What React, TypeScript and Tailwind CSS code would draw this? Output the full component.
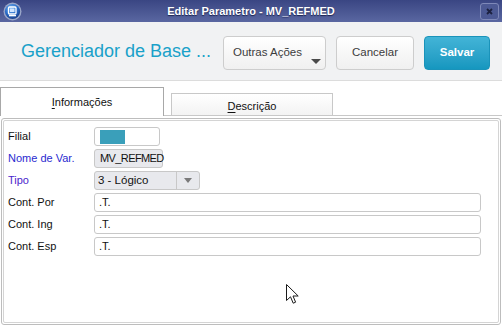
import React from "react";

const font = { fontFamily: '"Liberation Sans", Arial, sans-serif' };

function AppIcon() {
  return (
    <svg width="19" height="19" viewBox="0 0 19 19">
      <defs>
        <radialGradient id="g1" cx="40%" cy="30%" r="70%">
          <stop offset="0%" stopColor="#6fb0f0" />
          <stop offset="60%" stopColor="#2a6cc8" />
          <stop offset="100%" stopColor="#1a3f8a" />
        </radialGradient>
      </defs>
      <circle cx="9.5" cy="9.5" r="9" fill="#9aa6c8" />
      <circle cx="9.5" cy="9.5" r="7.6" fill="url(#g1)" />
      <rect x="5.5" y="5" width="7.5" height="7" rx="1" fill="none" stroke="#ffffff" strokeWidth="1.3" />
      <rect x="7" y="6.5" width="4.5" height="3.5" fill="#cfe4ff" />
      <rect x="6" y="13" width="7" height="1.3" fill="#ffffff" />
    </svg>
  );
}

function Cursor() {
  return (
    <svg width="13" height="21" viewBox="0 0 13 21" className="absolute left-[286px] top-[284px]">
      <path
        d="M0.5 0.5 L0.5 16.5 L4.5 12.8 L7.2 19.2 L9.6 18.2 L7 12 L12.2 12 Z"
        fill="#ffffff"
        stroke="#1a1a1a"
        strokeWidth="1"
        strokeLinejoin="miter"
      />
    </svg>
  );
}

function Row({ label, labelClass, children }: { label: string; labelClass?: string; children: React.ReactNode }) {
  return (
    <div className="flex h-[19px] items-center">
      <div className={"w-[86px] shrink-0 text-[11px] " + (labelClass ?? "text-[#111111]")}>{label}</div>
      {children}
    </div>
  );
}

export default function App() {
  return (
    <div style={font} className="relative flex h-[326px] w-[502px] flex-col overflow-hidden bg-white">
      {/* Title bar */}
      <div className="grid h-[22px] shrink-0 grid-cols-[1fr_auto_1fr] items-center bg-gradient-to-b from-[#3a4683] to-[#5a67a1] px-[3px]">
        <div className="flex items-center">
          <AppIcon />
        </div>
        <div className="text-[11px] font-bold text-white [text-shadow:0_1px_1px_#1a2250]">Editar Parametro - MV_REFMED</div>
        <div className="flex justify-end">
          <div className="flex h-[17px] w-[19px] items-center justify-center rounded-[3px] border border-[#7e88b8] bg-[#4c5994]">
            <svg width="7" height="7" viewBox="0 0 7 7">
              <path d="M1 1 L6 6 M6 1 L1 6" stroke="#1c2140" strokeWidth="1.8" />
            </svg>
          </div>
        </div>
      </div>

      {/* Header */}
      <div className="flex h-[59px] shrink-0 items-center border-b border-[#dcdcdc] bg-[#f1f2f3] pl-[21px] pr-[12px]">
        <div className="flex-1 pt-[1px] text-[18px] text-[#19a1c9]">Gerenciador de Base ...</div>
        <div className="mt-[3px] flex gap-[10px]">
          <button className="relative flex h-[34px] w-[103px] items-center justify-center rounded-[4px] border border-[#cdcdcd] bg-gradient-to-b from-white to-[#f0f0f0] pr-[14px] text-[11.5px] text-[#3c3c3c]">
            Outras Ações
            <svg width="10" height="5" viewBox="0 0 10 5" className="absolute bottom-[5px] right-[4px]">
              <path d="M0 0 L10 0 L5 5 Z" fill="#4a4a4a" />
            </svg>
          </button>
          <button className="flex h-[34px] w-[78px] items-center justify-center rounded-[4px] border border-[#cdcdcd] bg-gradient-to-b from-white to-[#f0f0f0] text-[11.5px] text-[#3c3c3c]">
            Cancelar
          </button>
          <button className="flex h-[34px] w-[66px] items-center justify-center rounded-[4px] border border-[#1a93ba] bg-gradient-to-b from-[#42b4d7] to-[#1597bf] text-[11.5px] font-bold text-white">
            Salvar
          </button>
        </div>
      </div>

      {/* Tabs */}
      <div className="flex h-[35px] shrink-0 items-end pt-[6px]">
        <div className="flex h-[29px] w-[164px] items-center justify-center border-l border-r border-t border-[#a8a8a8] bg-white text-[11px] text-[#111111]">
          <span>
            <span className="underline underline-offset-2">I</span>nformações
          </span>
        </div>
        <div className="h-px w-[7px] self-end bg-[#c8c8c8]" />
        <div className="flex h-[23px] w-[162px] items-center justify-center border border-[#c8c8c8] bg-gradient-to-b from-white to-[#f3f3f3] pt-[3px] text-[11px] text-[#111111]">
          <span>
            <span className="underline underline-offset-2">D</span>escrição
          </span>
        </div>
        <div className="h-px flex-1 self-end bg-[#c8c8c8]" />
      </div>

      {/* Panel */}
      <div className="mx-px mb-px mt-[2px] flex flex-1 flex-col rounded-[3px] border border-[#bdbdbd] p-px">
        <div className="flex flex-1 flex-col gap-[3px] rounded-[2px] border border-[#d4d4d4] pl-[4px] pt-[6px]">
          <Row label="Filial">
            <div className="flex h-[19px] w-[66px] items-center rounded-[3px] border border-[#c8c8c8] bg-white pl-[5px]">
              <div className="h-[14px] w-[25px] bg-[#3a9fba]" />
            </div>
          </Row>
          <Row label="Nome de Var." labelClass="text-[#2a2ad0]">
            <div className="flex h-[19px] w-[69px] items-center rounded-[3px] border border-[#c8c8c8] bg-[#e8e9ed] pl-[5px] text-[11px] tracking-[-0.6px] text-[#111111]">
              MV_REFMED
            </div>
          </Row>
          <Row label="Tipo" labelClass="text-[#4a25cc]">
            <div className="flex h-[19px] w-[106px] items-center rounded-[3px] border border-[#c8c8c8] bg-[#e8e9ed] text-[11.5px] text-[#111111]">
              <div className="flex-1 pl-[3px]">3 - Lógico</div>
              <div className="flex h-full w-[23px] items-center justify-center border-l border-[#c8c8c8]">
                <svg width="8" height="5" viewBox="0 0 8 5">
                  <path d="M0 0 L8 0 L4 5 Z" fill="#7a7a7a" />
                </svg>
              </div>
            </div>
          </Row>
          {["Cont. Por", "Cont. Ing", "Cont. Esp"].map((l) => (
            <Row key={l} label={l}>
              <div className="flex h-[19px] w-[387px] items-center rounded-[3px] border border-[#c8c8c8] bg-white pl-[4px] text-[11px] text-[#111111]">
                .T.
              </div>
            </Row>
          ))}
        </div>
      </div>

      <Cursor />
    </div>
  );
}
